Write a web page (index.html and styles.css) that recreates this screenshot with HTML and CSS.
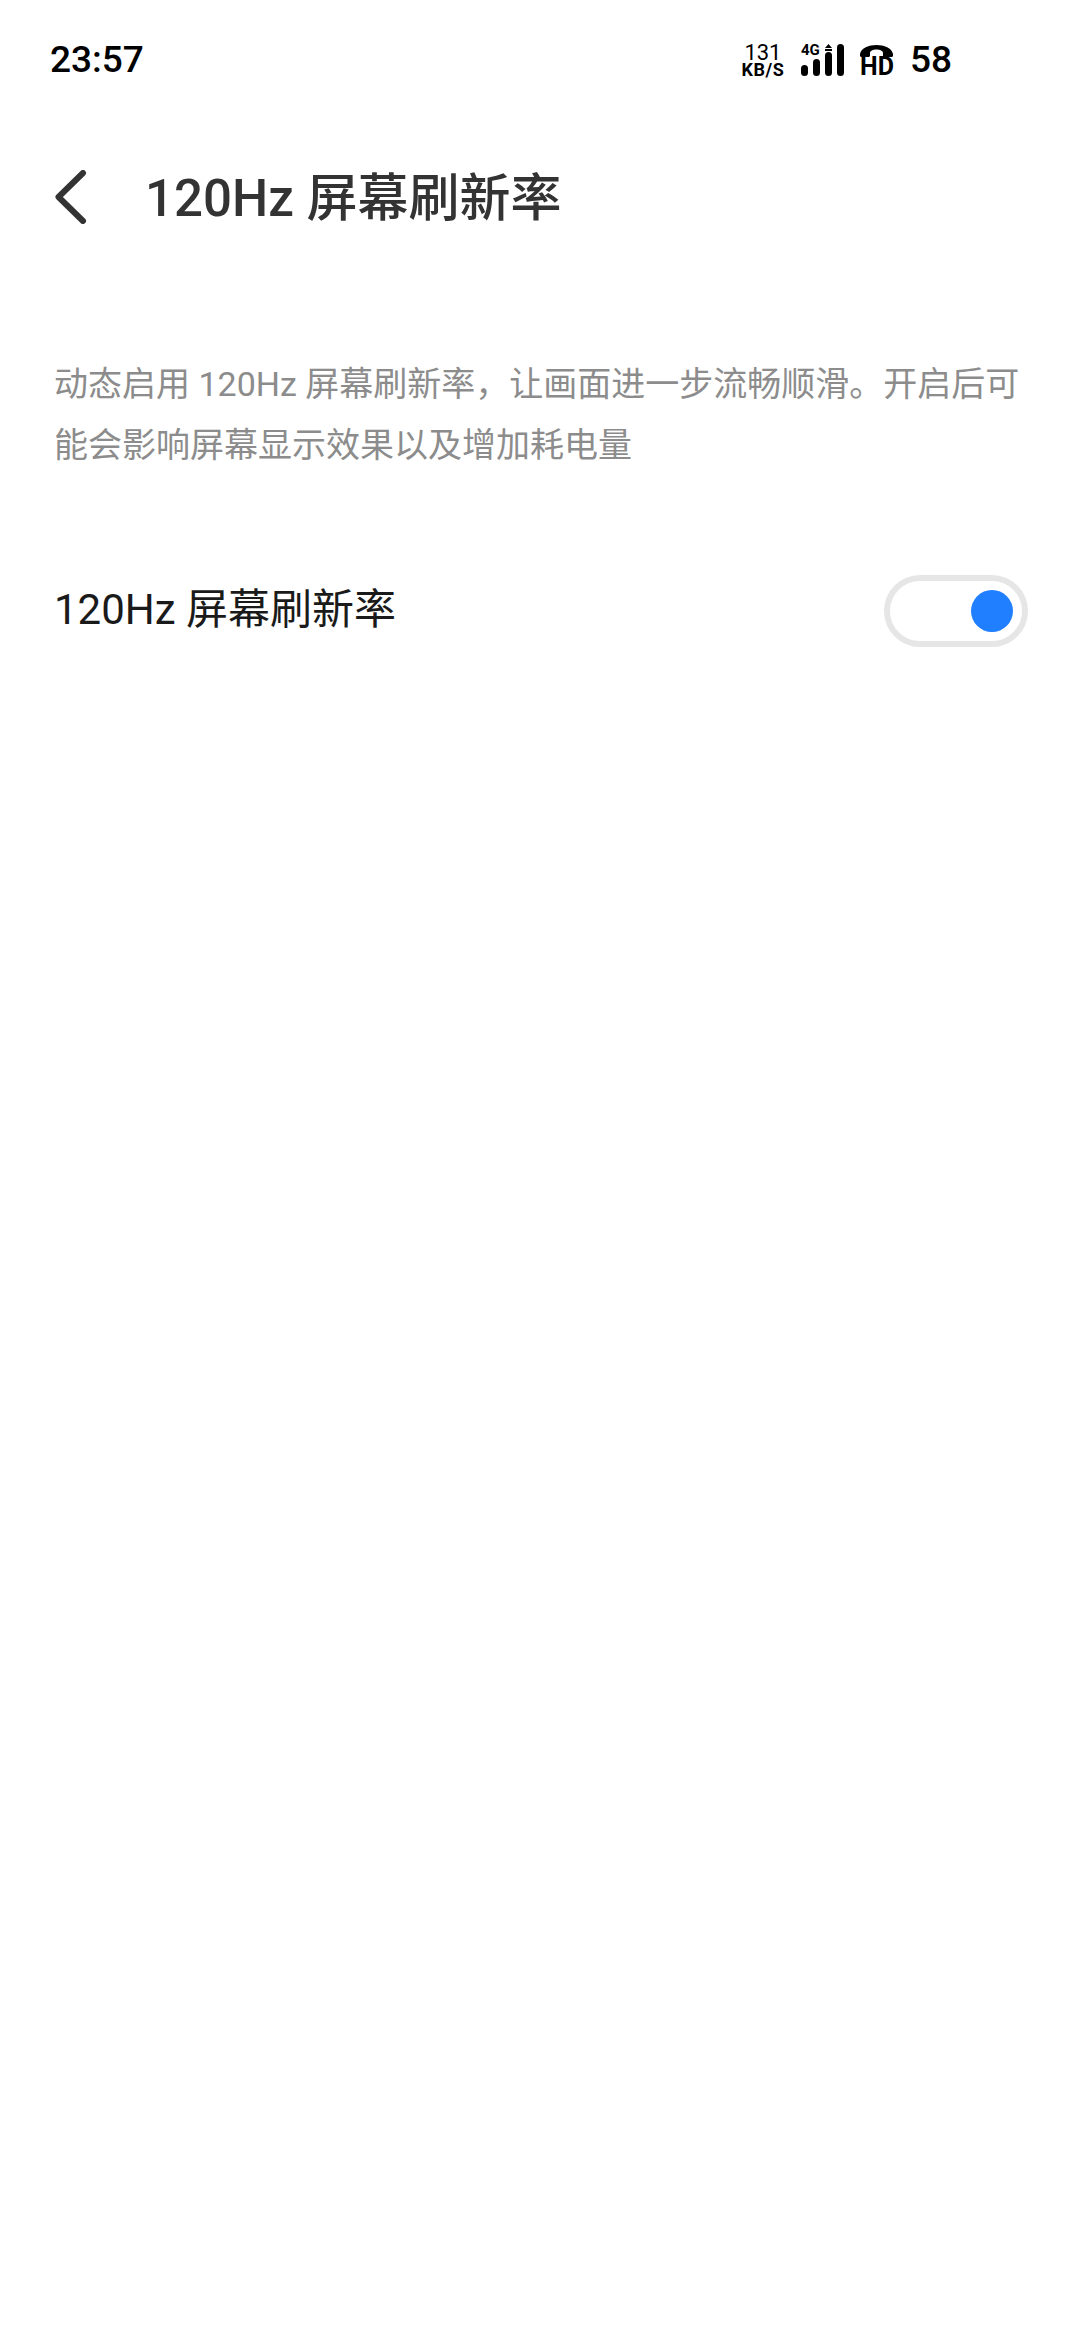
FILE: index.html
```html
<!DOCTYPE html>
<html lang="zh-CN">
<head>
  <meta charset="UTF-8" />
  <meta name="viewport" content="width=device-width, initial-scale=1.0"/>
  <title>120Hz 屏幕刷新率</title>
  <link rel="stylesheet" href="styles.css">
</head>
<body>
  <div class="status-bar">
    <span class="time">23:57</span>
    <div class="status-icons">
      <div class="speed">
        <span class="speed-num">131</span>
        <span class="speed-unit">KB/S</span>
      </div>
      <svg class="signal" width="43" height="36" viewBox="0 -4 43 36">
        <text x="0" y="11" class="signal-label">4G</text>
        <rect x="0" y="21" width="7" height="11" rx="3.5"/>
        <rect x="12" y="15" width="7" height="17" rx="3.5"/>
        <rect x="24" y="8" width="7" height="24" rx="3.5"/>
        <rect x="36" y="0" width="7" height="32" rx="3.5"/>
        <path d="M27.5 0 L31 4 H24 Z"/>
        <rect x="24" y="5" width="7" height="2"/>
      </svg>
      <div class="hd-call">
        <svg class="handset" width="33" height="12" viewBox="0 0 33 12">
          <path d="M0 9 C1 3 9 0 16.5 0 C24 0 32 3 33 9 V10.5 C33 11.5 32 12 31 12 H25 C24 12 23 11.5 23 10.5 V8 C23 6 20 4.5 16.5 4.5 C13 4.5 10 6 10 8 V10.5 C10 11.5 9 12 8 12 H2 C1 12 0 11.5 0 10.5Z"/>
        </svg>
        <span class="hd-label">HD</span>
      </div>
      <span class="battery">58</span>
    </div>
  </div>

  <div class="header">
    <svg class="back" width="32" height="54" viewBox="0 0 32 54">
      <path d="M28 3 L3.5 27 L28 51" fill="none" stroke="#333" stroke-width="6" stroke-linecap="round" stroke-linejoin="round"/>
    </svg>
    <h1 class="title">120Hz 屏幕刷新率</h1>
  </div>

  <p class="desc">动态启用 120Hz 屏幕刷新率，让画面进一步流畅顺滑。开启后可能会影响屏幕显示效果以及增加耗电量</p>

  <div class="row">
    <span class="row-label">120Hz 屏幕刷新率</span>
    <div class="switch"><div class="knob"></div></div>
  </div>
</body>
</html>
```

FILE: styles.css
```css
* {
  margin: 0;
  padding: 0;
  box-sizing: border-box;
}

body {
  width: 1080px;
  height: 2340px;
  background: #fff;
  font-family: Roboto, "Noto Sans CJK SC", sans-serif;
  overflow: hidden;
}

.status-bar {
  height: 118px;
  padding: 0 128px 0 50px;
  display: flex;
  align-items: center;
  justify-content: space-between;
  color: #000;
}

.time {
  font-size: 37px;
  font-weight: 500;
}

.status-icons {
  display: flex;
  align-items: center;
  padding-top: 2px;
}

.speed {
  display: flex;
  flex-direction: column;
  align-items: center;
  width: 42px;
  margin-right: 17px;
}

.speed-num {
  font-size: 22px;
  line-height: 18px;
}

.speed-unit {
  font-size: 18px;
  font-weight: 700;
  line-height: 15px;
  letter-spacing: 0.5px;
}

.signal {
  margin: -4px 16px 0 0;
}

.signal-label {
  font-family: Roboto, sans-serif;
  font-size: 15px;
  font-weight: 700;
}

.hd-call {
  display: flex;
  flex-direction: column;
  align-items: center;
  width: 34px;
  margin-right: 16px;
}

.handset {
  margin-bottom: 1px;
}

.hd-label {
  font-size: 25px;
  font-weight: 700;
  line-height: 18px;
}

.battery {
  font-size: 37px;
  font-weight: 500;
  margin-top: -2px;
}

.header {
  height: 158px;
  padding: 0 55px;
  display: flex;
  align-items: center;
}

.back {
  margin-right: 58px;
}

.title {
  font-size: 51px;
  font-weight: 500;
  color: #333;
  margin-top: -6px;
}

.desc {
  margin-top: 78px;
  padding: 0 54px;
  font-size: 34px;
  line-height: 61px;
  color: #8c8c8c;
}

.row {
  margin-top: 99px;
  padding: 0 52px 0 54px;
  display: flex;
  align-items: center;
  justify-content: space-between;
}

.row-label {
  font-size: 42px;
  color: #1a1a1a;
  margin-top: -12px;
}

.switch {
  width: 144px;
  height: 72px;
  border: 6px solid #e6e6e6;
  border-radius: 36px;
  display: flex;
  align-items: center;
  justify-content: flex-end;
  padding-right: 9px;
}

.knob {
  width: 42px;
  height: 42px;
  border-radius: 50%;
  background: #1f7fff;
}
```
